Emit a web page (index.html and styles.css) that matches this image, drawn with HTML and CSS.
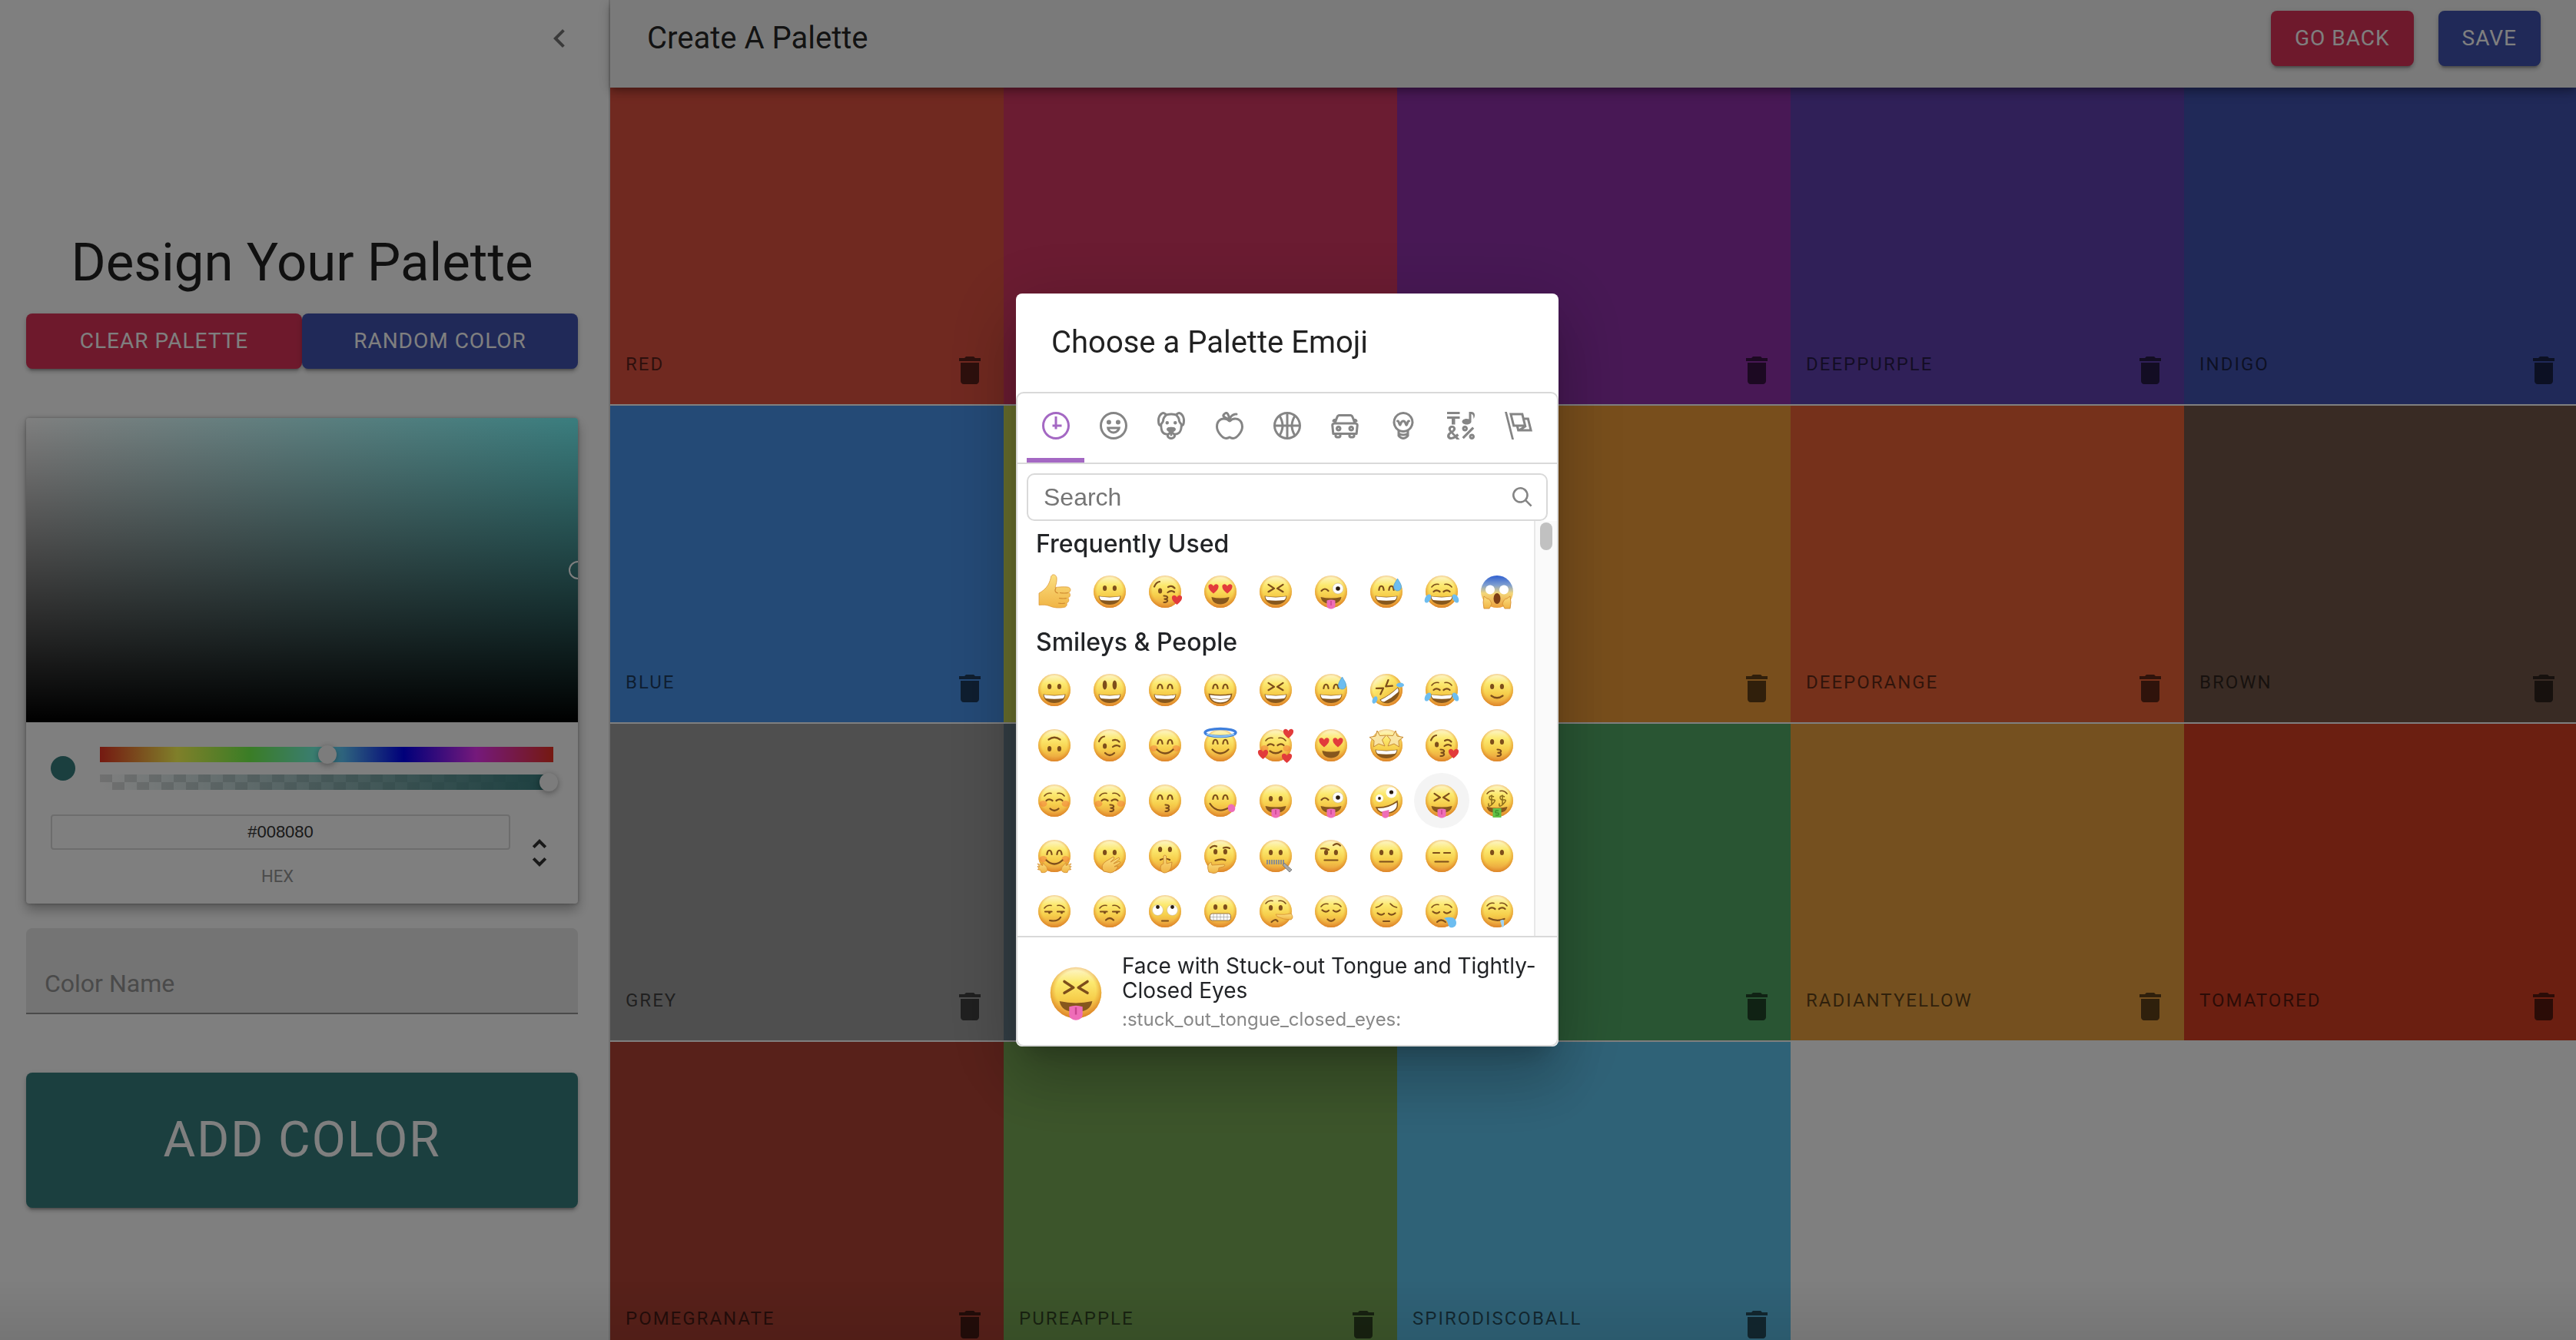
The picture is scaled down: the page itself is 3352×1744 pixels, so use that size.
FILE: index.html
```html
<!DOCTYPE html>
<html lang="en">
<head>
<meta charset="utf-8">
<title>Create A Palette</title>
<link rel="stylesheet" href="styles.css">
</head>
<body>

<svg class="sprite" aria-hidden="true">
  <defs>
    <linearGradient id="skin" x1="0" y1="0" x2="0" y2="1">
      <stop offset="0" stop-color="#fdf6cf"/><stop offset=".3" stop-color="#fce96f"/>
      <stop offset=".62" stop-color="#f6ce4b"/><stop offset="1" stop-color="#e8973a"/>
    </linearGradient>
    <radialGradient id="rim" cx=".5" cy=".46" r=".54">
      <stop offset=".72" stop-color="#e8952f" stop-opacity="0"/><stop offset="1" stop-color="#d97f22" stop-opacity=".8"/>
    </radialGradient>
    <linearGradient id="fear" x1="0" y1="0" x2="0" y2="1">
      <stop offset="0" stop-color="#2f5fd0"/><stop offset=".3" stop-color="#7f9fd0"/>
      <stop offset=".55" stop-color="#f3d678"/><stop offset="1" stop-color="#ec9f3b"/>
    </linearGradient>
    <linearGradient id="hand" x1="0" y1="0" x2="0" y2="1">
      <stop offset="0" stop-color="#fbdf80"/><stop offset="1" stop-color="#f0b445"/>
    </linearGradient>

    <!-- shared face parts -->
    <g id="face"><circle cx="24" cy="24" r="21" fill="url(#skin)"/><circle cx="24" cy="24" r="21" fill="url(#rim)"/></g>
    <g id="dots" fill="#7d4e1b"><ellipse cx="17.6" cy="19.6" rx="2.6" ry="3.5"/><ellipse cx="30.4" cy="19.6" rx="2.6" ry="3.5"/></g>
    <g id="arcs" class="ink"><path d="M14.4 22c.8-7 5.4-7 6.2 0M27.4 22c.8-7 5.4-7 6.2 0"/></g>
    <g id="squint" class="ink"><path d="M14.5 14.8l7.5 5-7.5 4.4M33.5 14.8l-7.5 5 7.5 4.4"/></g>
    <g id="shut" class="ink"><path d="M13.5 24q3.5-3.4 8 0M26.500 24q4.500-3.400 8 0"/></g>
    <g id="lids" class="ink"><path d="M12.500 22.500q4.500 4 8.500.5M27 23q4 3.500 8.500-.5"/></g>
    <g id="brows" class="ink thin"><path d="M11 18q3.500-4.500 9-3.500M28 14.500q5.500-1 9 3.500"/></g>
    <g id="sadbrows" class="ink thin"><path d="M10.500 19q5-1 8.500-5M29 14q3.500 4 8.500 5"/></g>
    <g id="side" class="ink"><path d="M12 23.500h8.500M28 23.500h8.500"/><circle cx="17.500" cy="24.800" r="1.600" fill="#7d4e1b" stroke="none"/><circle cx="33.500" cy="24.800" r="1.600" fill="#7d4e1b" stroke="none"/></g>
    <g id="blush" fill="#f2703c" opacity=".45"><ellipse cx="9.500" cy="28" rx="5" ry="4"/><ellipse cx="38.500" cy="28" rx="5" ry="4"/></g>
    <path id="heart" d="M0 6C-5 2-7-1-6.500-4-6-7-1.500-7.500 0-3.500 1.500-7.500 6-7 6.500-4 7-1 5 2 0 6z" fill="#e23b3b"/>
    <g id="hearts"><use href="#heart" x="15" y="20.500"/><use href="#heart" x="33" y="20.500"/></g>
    <g id="grin"><path d="M9.500 29.500q14.500 2.500 29 0C38 37 32 41 24 41S10 37 9.500 29.500z" fill="#86571d"/><path d="M10.500 30.300q13.500 2.300 27 0c-.3 2.700-1.200 3.700-2.500 4.700q-11 1.600-22 0c-1.300-1-2.200-2-2.500-4.700z" fill="#fff"/></g>
    <g id="open"><path d="M12.500 31q11.500 3 23 0c-.5 6-5 9.500-11.500 9.500S13 37 12.500 31z" fill="#86571d"/></g>
    <g id="tongue"><path d="M10.500 31q13.500 3 27 0c-1 6-6 9-13.500 9s-12.500-3-13.500-9z" fill="#86571d"/><path d="M18.500 35.500q5.500-2 11 0v6.500c0 6-11 6-11 0z" fill="#ee6db8"/><path d="M24 36v6" stroke="#c9458f" stroke-width="1.500"/></g>
    <path id="smile" class="ink" d="M16.500 31.500q7.500 5.500 15 0"/>
    <path id="bigsmile" class="ink" d="M13.500 29.500q10.500 10 21 0"/>
    <path id="kiss" class="ink" d="M22.500 29.500c6 0 6 4 1 4.200 5 0 5 4.300-1 4.300"/>
    <path id="flat" class="ink" d="M15.500 31.500h17"/>
    <path id="frown" class="ink" d="M19 35.500q5-5 10 0"/>
    <path id="tear" d="M0-8C3-3 5-.5 5 3A5 5 0 0 1-5 3C-5-.5-3-3 0-8z" fill="#6dbdf0" stroke="#3e97d4" stroke-width=".6"/>
    <g id="wildeye"><circle cx="33" cy="20" r="7" fill="#fff" stroke="#c9b28a" stroke-width=".6"/><circle cx="33" cy="20" r="2.800" fill="#2a1c10"/></g>

    <!-- emoji -->
    <symbol id="e-thumb" viewBox="0 0 48 48"><path d="M4 26c4-2 9-6 12-11 2-4 3-7 3.500-10 1-5 7-3.500 7.500 1 .5 5-1 9-2 12.500 4-.5 12-1 16-.5 5 .5 5 6 1.500 7 3 1.500 2.500 6.500-1 7.200 2.200 1.800 1.500 6-1.700 6.600 1.200 2.200 0 5.200-3.300 5.700-6 1-13 .8-18-1.500-4-1.800-9-2-14.500-1.500z" fill="url(#hand)" stroke="#dd9a3a" stroke-width=".8"/><path d="M31 25.500q6 1 11 0M30 32.500q6 1 10 0M29 39q5 1 9 0M26 19q-3 6 3 7" fill="none" stroke="#cf8a30" stroke-width="1.200"/></symbol>
    <symbol id="e-grinning" viewBox="0 0 48 48"><use href="#face"/><use href="#dots"/><use href="#grin"/></symbol>
    <symbol id="e-smiley" viewBox="0 0 48 48"><use href="#face"/><g fill="#7d4e1b"><ellipse cx="17.600" cy="17.500" rx="2.800" ry="6"/><ellipse cx="30.400" cy="17.500" rx="2.800" ry="6"/></g><use href="#grin"/></symbol>
    <symbol id="e-smile" viewBox="0 0 48 48"><use href="#face"/><use href="#arcs"/><use href="#grin"/></symbol>
    <symbol id="e-beam" viewBox="0 0 48 48"><use href="#face"/><use href="#arcs"/><path d="M9.500 29.500q14.500 2.500 29 0C38 37 32 41 24 41S10 37 9.500 29.500z" fill="#fff" stroke="#86571d" stroke-width="1.600"/><path d="M12 35q12 3 24 0" fill="none" stroke="#a98a60"/></symbol>
    <symbol id="e-laugh" viewBox="0 0 48 48"><use href="#face"/><use href="#squint"/><use href="#grin"/></symbol>
    <symbol id="e-sweat" viewBox="0 0 48 48"><use href="#face"/><use href="#arcs"/><use href="#grin"/><use href="#tear" x="38.500" y="15"/></symbol>
    <symbol id="e-rofl" viewBox="0 0 48 48"><g transform="rotate(-35 24 24)"><use href="#face"/><use href="#squint"/><use href="#grin"/></g><ellipse cx="42" cy="17.500" rx="5" ry="3" fill="#6dbdf0"/><ellipse cx="9" cy="37" rx="3" ry="5" transform="rotate(25 9 37)" fill="#6dbdf0"/></symbol>
    <symbol id="e-joy" viewBox="0 0 48 48"><use href="#face"/><use href="#brows"/><use href="#shut"/><use href="#grin"/><ellipse cx="6" cy="33" rx="3.600" ry="6" transform="rotate(30 6 33)" fill="#6dbdf0"/><ellipse cx="42" cy="33" rx="3.600" ry="6" transform="rotate(-30 42 33)" fill="#6dbdf0"/></symbol>
    <symbol id="e-slight" viewBox="0 0 48 48"><use href="#face"/><use href="#dots"/><use href="#smile"/></symbol>
    <symbol id="e-upside" viewBox="0 0 48 48"><use href="#face"/><g transform="rotate(180 24 24)"><use href="#dots"/><use href="#smile"/></g></symbol>
    <symbol id="e-wink" viewBox="0 0 48 48"><use href="#face"/><ellipse cx="17.600" cy="25" rx="2.600" ry="3.600" fill="#7d4e1b"/><path class="ink" d="M10 19q2.500-6 7-6.500M28 17.500q5-2 8.500 2M28 26q4.500-3.500 9-.5M18 34q6 6 12 0"/></symbol>
    <symbol id="e-blush" viewBox="0 0 48 48"><use href="#face"/><use href="#blush"/><use href="#arcs"/><use href="#bigsmile"/></symbol>
    <symbol id="e-angel" viewBox="0 0 48 48"><use href="#face"/><use href="#arcs"/><use href="#bigsmile"/><ellipse cx="24" cy="7.500" rx="20" ry="5" fill="none" stroke="#3f7fdc" stroke-width="3.400"/><path d="M6 9.500q18 6 36 0" fill="none" stroke="#8cc4f4" stroke-width="2"/></symbol>
    <symbol id="e-adore" viewBox="0 0 48 48"><use href="#face"/><use href="#blush"/><use href="#brows"/><use href="#shut"/><use href="#smile"/><use href="#heart" x="40.500" y="9"/><use href="#heart" x="7.500" y="36"/><use href="#heart" x="38.500" y="41"/></symbol>
    <symbol id="e-hearteyes" viewBox="0 0 48 48"><use href="#face"/><use href="#hearts"/><use href="#open"/></symbol>
    <symbol id="e-star" viewBox="0 0 48 48"><use href="#face"/><path d="M12 5l3.500 6.500 8-.5-5 6 3.500 8-8-3-6.500 4 .5-8-6-4.500 8-1.500zM36 5l2 7 8 1.500-6 4.500.5 8-6.500-4-8 3 3.500-8-5-6 8 .5z" fill="#f9e5a3" stroke="#c88a35" stroke-width="1"/><use href="#grin"/></symbol>
    <symbol id="e-kissheart" viewBox="0 0 48 48"><use href="#face"/><ellipse cx="17.600" cy="23" rx="2.600" ry="3.600" fill="#7d4e1b"/><path class="ink" d="M10 17.500q2.500-6 7-6.500M28 18q5-3 8.500 1.500M27.500 25q4.500-3.500 8.500-.5"/><use href="#kiss"/><use href="#heart" x="39.500" y="35"/></symbol>
    <symbol id="e-kissing" viewBox="0 0 48 48"><use href="#face"/><use href="#dots"/><use href="#kiss" x="2"/></symbol>
    <symbol id="e-relaxed" viewBox="0 0 48 48"><use href="#face"/><use href="#blush"/><use href="#brows"/><use href="#shut"/><path class="ink" d="M18.500 34.500q5.500 5 11 0"/></symbol>
    <symbol id="e-kissclosed" viewBox="0 0 48 48"><use href="#face"/><use href="#blush"/><use href="#brows"/><use href="#shut"/><use href="#kiss" x="2"/></symbol>
    <symbol id="e-kisssmile" viewBox="0 0 48 48"><use href="#face"/><use href="#arcs"/><use href="#kiss" x="2"/></symbol>
    <symbol id="e-yum" viewBox="0 0 48 48"><use href="#face"/><use href="#arcs"/><path class="ink" d="M10.500 28q9 14 25 5"/><path d="M34 31c3-4 7-3 9 1 1 4-1 7-4 7-4 0-6-3-5-8z" fill="#ee6db8"/></symbol>
    <symbol id="e-tongue" viewBox="0 0 48 48"><use href="#face"/><use href="#dots" y="2"/><use href="#tongue"/></symbol>
    <symbol id="e-zany" viewBox="0 0 48 48"><use href="#face"/><path class="ink" d="M11.500 23q4.500-5 9 0"/><use href="#wildeye"/><use href="#tongue"/></symbol>
    <symbol id="e-crazy" viewBox="0 0 48 48"><use href="#face"/><circle cx="15" cy="21" r="5" fill="#fff"/><circle cx="15" cy="21" r="1.900" fill="#2a1c10"/><circle cx="30.500" cy="13.500" r="7" fill="#fff"/><circle cx="30.500" cy="13" r="2.600" fill="#2a1c10"/><path d="M11 33q15 1 27-8c2 9-3 14-12 15-8 .8-13-2-15-7z" fill="#fff" stroke="#86571d" stroke-width="1.600"/><path d="M18.500 38l9-2v7c-1 5-9 5-9 0z" fill="#ee6db8"/></symbol>
    <symbol id="e-stuck" viewBox="0 0 48 48"><use href="#face"/><use href="#squint"/><use href="#tongue"/></symbol>
    <symbol id="e-money" viewBox="0 0 48 48"><use href="#face"/><use href="#brows" y="-3"/><path d="M20 19q-6-2.500-6 1t5 3-1 5.500-5-1M17 16.500v13M34 19q-6-2.500-6 1t5 3-1 5.500-5-1M31 16.500v13" fill="none" stroke="#8a6b1c" stroke-width="1.500"/><path d="M10.500 32q13.500 3 27 0c-1 6-6 8-13.500 8s-12.500-2-13.500-8z" fill="#86571d"/><path d="M18.500 34h11v12h-11z" fill="#63c248"/><path d="M26 37h-4v3h4v3h-4" fill="none" stroke="#2f7f25"/></symbol>
    <symbol id="e-hug" viewBox="0 0 48 48"><use href="#face"/><use href="#blush"/><use href="#arcs"/><use href="#bigsmile"/><path id="palm" d="M2 34l3 4-3-.5 2 3-2 1 4 1 1 3q6 1 8-3 0-5-4-7l-2-3 0 4z" fill="url(#hand)" stroke="#d68f32" stroke-width=".8"/><use href="#palm" transform="matrix(-1 0 0 1 48 0)"/></symbol>
    <symbol id="e-giggle" viewBox="0 0 48 48"><use href="#face"/><use href="#dots"/><path d="M16 44q-5-8 3-13l10-6 1 2-5 5 11-6 1 2-8 6 8-3 1 2-8 5 5-1q-3 8-10 9z" fill="url(#hand)" stroke="#cf8a30" stroke-width=".9"/></symbol>
    <symbol id="e-shush" viewBox="0 0 48 48"><use href="#face"/><use href="#dots" y="-4"/><path class="ink" d="M18 29q6-3 12 0"/><path d="M22 24q2-2 3.500 0l.5 10 7-2-1 7q-3 7-9 7-5-1-5-7 0-4 4-5z" fill="url(#hand)" stroke="#cf8a30" stroke-width=".9"/></symbol>
    <symbol id="e-think" viewBox="0 0 48 48"><use href="#face"/><use href="#dots" y="-1"/><path class="ink" d="M11 13.500q4-4 8-2M28 13.500q4-1.500 8 .5M17.500 30q8-3 13-.5"/><path d="M9 45q-4-10 3-13l1 4 16-1q2 2-1 3l-6 1.500q0 7-7 7z" fill="url(#hand)" stroke="#cf8a30" stroke-width=".9"/></symbol>
    <symbol id="e-zip" viewBox="0 0 48 48"><use href="#face"/><use href="#dots"/><path d="M12 32h24" stroke="#8d8d8d" stroke-width="6" stroke-dasharray="2 1"/><path d="M35 33l10 9-3 3-9-9z" fill="#a8a8a8" stroke="#6f6f6f" stroke-width=".8"/></symbol>
    <symbol id="e-raised" viewBox="0 0 48 48"><use href="#face"/><use href="#dots"/><path class="ink" d="M11 14.500q5-1 10 1.500M27 10q5-4 9 .5M15.500 29.500h17"/></symbol>
    <symbol id="e-neutral" viewBox="0 0 48 48"><use href="#face"/><use href="#dots"/><use href="#flat"/></symbol>
    <symbol id="e-expressionless" viewBox="0 0 48 48"><use href="#face"/><path class="ink" d="M13 20h8M27 20h8"/><use href="#flat"/></symbol>
    <symbol id="e-nomouth" viewBox="0 0 48 48"><use href="#face"/><use href="#dots"/></symbol>
    <symbol id="e-smirk" viewBox="0 0 48 48"><use href="#face"/><use href="#brows" y="2"/><use href="#side" y="1"/><path class="ink" d="M18 36q10 2 14-4"/></symbol>
    <symbol id="e-unamused" viewBox="0 0 48 48"><use href="#face"/><use href="#brows" y="2"/><use href="#side" y="1"/><use href="#frown"/></symbol>
    <symbol id="e-roll" viewBox="0 0 48 48"><use href="#face"/><g fill="#fff" stroke="#c9b28a" stroke-width=".6"><circle cx="14.500" cy="22.500" r="7"/><circle cx="33.500" cy="22.500" r="7"/></g><circle cx="14.500" cy="18.500" r="2.400" fill="#2a1c10"/><circle cx="33.500" cy="18.500" r="2.400" fill="#2a1c10"/><path class="ink" d="M20 36.500h8"/></symbol>
    <symbol id="e-grimace" viewBox="0 0 48 48"><use href="#face"/><use href="#dots" y="-1"/><rect x="10.500" y="27" width="27" height="9" rx="3" fill="#fff" stroke="#97713c"/><path d="M11 31.500h26M15 27v9M19.500 27v9M24 27v9M28.500 27v9M33 27v9" stroke="#a9a9a9" stroke-width=".8"/></symbol>
    <symbol id="e-lying" viewBox="0 0 48 48"><use href="#face"/><use href="#dots"/><use href="#brows" y="-4"/><path class="ink" d="M18.500 38q5-5 8-1"/><path d="M24 28q12 1 20-1 4 5 0 8-10 0-18-4z" fill="url(#hand)" stroke="#d68f32" stroke-width=".8"/></symbol>
    <symbol id="e-relieved" viewBox="0 0 48 48"><use href="#face"/><use href="#brows"/><use href="#lids"/><path class="ink" d="M19.500 34.500q4.500 4.500 9 0"/></symbol>
    <symbol id="e-pensive" viewBox="0 0 48 48"><use href="#face"/><use href="#sadbrows"/><use href="#lids" y="4"/><path class="ink" d="M20 37h8"/></symbol>
    <symbol id="e-sleepy" viewBox="0 0 48 48"><use href="#face"/><use href="#brows" y="1"/><use href="#lids" y="2"/><path class="ink" d="M18 38q5-5 11 0"/><path d="M27 33c10-3 16 0 16 6 0 5-4 7-8 6-4-2-1-7-8-12z" fill="#6dbdf0"/></symbol>
    <symbol id="e-drool" viewBox="0 0 48 48"><use href="#face"/><use href="#brows" y="-1"/><use href="#shut" y="-3"/><path class="ink" d="M13.500 33q10 5 20 1"/><path d="M28 36q4-2 5 0v7q-2 4-3 0z" fill="#9fd3f3"/></symbol>
    <symbol id="e-scream" viewBox="0 0 48 48"><circle cx="24" cy="24" r="21" fill="url(#fear)"/><circle cx="15" cy="21.500" r="6" fill="#fff"/><circle cx="33" cy="21.500" r="6" fill="#fff"/><ellipse cx="24" cy="33" rx="4.500" ry="7" fill="#7d3f16"/><path d="M7 30q-2 8 0 16h7l3-6q-2-7-6-7zM41 30q2 8 0 16h-7l-3-6q2-7 6-7z" fill="url(#hand)" stroke="#d68f32" stroke-width=".9"/></symbol>
  </defs>
  <symbol id="trash" viewBox="0 0 24 24"><path d="M6 19c0 1.100.9 2 2 2h8c1.100 0 2-.9 2-2V7H6v12zM19 4h-3.500l-1-1h-5l-1 1H5v2h14V4z"/></symbol>
</svg>

<div class="app">
  <aside class="drawer">
    <div class="drawer-head">
      <button class="icon-button" aria-label="Close drawer"><svg viewBox="0 0 24 24"><path d="M15.410 7.410L14 6l-6 6 6 6 1.410-1.410L10.830 12z"/></svg></button>
    </div>
    <div class="designer">
      <h1 class="designer-title">Design Your Palette</h1>
      <div class="designer-actions">
        <button class="button secondary">CLEAR PALETTE</button>
        <button class="button primary">RANDOM COLOR</button>
      </div>

      <div class="picker">
        <div class="saturation"><span class="saturation-pointer"></span></div>
        <div class="picker-body">
          <div class="picker-controls">
            <span class="picker-swatch"></span>
            <div class="picker-sliders">
              <div class="slider hue"><input type="range" min="0" max="360" value="179" aria-label="Hue"></div>
              <div class="slider alpha"><input type="range" min="0" max="100" value="100" aria-label="Opacity"></div>
            </div>
          </div>
          <div class="picker-fields">
            <div class="hex-field">
              <input id="hex" type="text" value="#008080">
              <label for="hex">HEX</label>
            </div>
            <button class="mode-toggle" aria-label="Change colour format"><svg viewBox="0 0 24 24"><path d="M12 5.830L15.170 9l1.410-1.410L12 3 7.410 7.590 8.830 9zM12 18.170L8.830 15l-1.410 1.410L12 21l4.590-4.590L15.170 15z"/></svg></button>
          </div>
        </div>
      </div>

      <input class="color-name" type="text" placeholder="Color Name" aria-label="Color Name">
      <button class="button add-color">ADD COLOR</button>
    </div>
  </aside>

  <main class="main">
    <header class="app-bar">
      <h2 class="app-title">Create A Palette</h2>
      <nav class="app-actions">
        <button class="button secondary">GO BACK</button>
        <button class="button primary">SAVE</button>
      </nav>
    </header>
    <div class="swatches">
      <div class="swatch red"><span>RED</span><button aria-label="Delete red"><svg><use href="#trash"/></svg></button></div>
      <div class="swatch pink"><span>PINK</span><button aria-label="Delete pink"><svg><use href="#trash"/></svg></button></div>
      <div class="swatch purple"><span>PURPLE</span><button aria-label="Delete purple"><svg><use href="#trash"/></svg></button></div>
      <div class="swatch deeppurple"><span>DEEPPURPLE</span><button aria-label="Delete deeppurple"><svg><use href="#trash"/></svg></button></div>
      <div class="swatch indigo"><span>INDIGO</span><button aria-label="Delete indigo"><svg><use href="#trash"/></svg></button></div>
      <div class="swatch blue"><span>BLUE</span><button aria-label="Delete blue"><svg><use href="#trash"/></svg></button></div>
      <div class="swatch lime"><span>LIME</span><button aria-label="Delete lime"><svg><use href="#trash"/></svg></button></div>
      <div class="swatch orange"><span>ORANGE</span><button aria-label="Delete orange"><svg><use href="#trash"/></svg></button></div>
      <div class="swatch deeporange"><span>DEEPORANGE</span><button aria-label="Delete deeporange"><svg><use href="#trash"/></svg></button></div>
      <div class="swatch brown"><span>BROWN</span><button aria-label="Delete brown"><svg><use href="#trash"/></svg></button></div>
      <div class="swatch grey"><span>GREY</span><button aria-label="Delete grey"><svg><use href="#trash"/></svg></button></div>
      <div class="swatch bluegrey"><span>BLUEGREY</span><button aria-label="Delete bluegrey"><svg><use href="#trash"/></svg></button></div>
      <div class="swatch green"><span>GREEN</span><button aria-label="Delete green"><svg><use href="#trash"/></svg></button></div>
      <div class="swatch radiantyellow"><span>RADIANTYELLOW</span><button aria-label="Delete radiantyellow"><svg><use href="#trash"/></svg></button></div>
      <div class="swatch tomatored"><span>TOMATORED</span><button aria-label="Delete tomatored"><svg><use href="#trash"/></svg></button></div>
      <div class="swatch pomegranate"><span>POMEGRANATE</span><button aria-label="Delete pomegranate"><svg><use href="#trash"/></svg></button></div>
      <div class="swatch pureapple"><span>PUREAPPLE</span><button aria-label="Delete pureapple"><svg><use href="#trash"/></svg></button></div>
      <div class="swatch spirodiscoball"><span>SPIRODISCOBALL</span><button aria-label="Delete spirodiscoball"><svg><use href="#trash"/></svg></button></div>
    </div>
  </main>
</div>

<div class="backdrop">
  <dialog open class="dialog" aria-labelledby="dialog-title">
    <h2 class="dialog-title" id="dialog-title">Choose a Palette Emoji</h2>
    <section class="mart">
      <nav class="anchors">
        <button class="anchor active" aria-label="Frequently Used"><svg viewBox="0 0 24 24"><path d="M13 4h-2l-.001 7H9v2h2v2h2v-2h4v-2h-4z"/><path d="M12 0C5.373 0 0 5.373 0 12s5.373 12 12 12 12-5.373 12-12S18.627 0 12 0m0 22C6.486 22 2 17.514 2 12S6.486 2 12 2s10 4.486 10 10-4.486 10-10 10"/></svg></button>
        <button class="anchor" aria-label="Smileys &amp; People"><svg viewBox="0 0 24 24"><path d="M12 0C5.373 0 0 5.373 0 12s5.373 12 12 12 12-5.373 12-12S18.627 0 12 0m0 22C6.486 22 2 17.514 2 12S6.486 2 12 2s10 4.486 10 10-4.486 10-10 10"/><path d="M8 7a2 2 0 1 0-.001 3.999A2 2 0 0 0 8 7M16 7a2 2 0 1 0-.001 3.999A2 2 0 0 0 16 7M15.232 15c-.693 1.195-1.870 2-3.349 2-1.477 0-2.655-.805-3.347-2H15m3-2H6a6 6 0 1 0 12 0"/></svg></button>
        <button class="anchor" aria-label="Animals &amp; Nature"><svg viewBox="0 0 24 24"><path d="M15.500 8a1.500 1.500 0 1 0 .001 3.001A1.500 1.500 0 0 0 15.500 8M8.500 8a1.500 1.500 0 1 0 .001 3.001A1.500 1.500 0 0 0 8.500 8"/><path d="M18.933 0h-.027c-.97 0-2.138.787-3.018 1.497-1.274-.374-2.612-.51-3.887-.51-1.285 0-2.616.133-3.874.517C7.245.79 6.069 0 5.093 0h-.027C3.352 0 .07 2.670.002 7.026c-.039 2.479.276 4.238 1.040 5.013.254.258.882.677 1.295.882.191 3.177.922 5.238 2.536 6.380.897.637 2.187.949 3.200 1.102C8.040 20.600 8 20.795 8 21c0 1.773 2.350 3 4 3 1.648 0 4-1.227 4-3 0-.201-.038-.393-.072-.586 2.573-.385 5.435-1.877 5.925-7.587.396-.22.887-.568 1.104-.788.763-.774 1.079-2.534 1.040-5.013C23.929 2.670 20.646 0 18.933 0M3.223 9.135c-.237.281-.837 1.155-.884 1.238-.15-.41-.368-1.349-.337-3.291.051-3.281 2.478-4.972 3.091-5.031.256.015.731.27 1.265.646-1.110 1.171-2.275 2.915-2.352 5.125-.133.546-.398.858-.783 1.313M12 22c-.901 0-1.954-.693-2-1 0-.654.475-1.236 1-1.602V20a1 1 0 1 0 2 0v-.602c.524.365 1 .947 1 1.602-.046.307-1.099 1-2 1m3-3.480v.02a4.752 4.752 0 0 0-1.262-1.020c1.092-.516 2.239-1.334 2.239-2.217 0-1.842-1.781-2.195-3.977-2.195-2.196 0-3.978.354-3.978 2.195 0 .883 1.148 1.701 2.238 2.217A4.800 4.800 0 0 0 9 18.539v-.025c-1-.076-2.182-.281-2.973-.842-1.301-.92-1.838-3.045-1.853-6.478l.023-.041c.496-.826 1.490-1.450 1.804-3.102 0-2.047 1.357-3.631 2.362-4.522C9.370 3.178 10.555 3 11.948 3c1.447 0 2.685.192 3.733.57 1 .9 2.316 2.465 2.316 4.480.313 1.651 1.307 2.275 1.803 3.102.035.058.068.117.102.178-.059 5.967-1.949 7.010-4.902 7.190m6.628-8.202c-.037-.065-.074-.13-.113-.195a7.587 7.587 0 0 0-.739-.987c-.385-.455-.648-.768-.782-1.313-.076-2.209-1.241-3.954-2.353-5.124.531-.376 1.004-.63 1.261-.647.636.071 3.044 1.764 3.096 5.031.027 1.810-.347 3.218-.37 3.235"/></svg></button>
        <button class="anchor" aria-label="Food &amp; Drink"><svg viewBox="0 0 24 24"><path d="M17 4.978c-1.838 0-2.876.396-3.680.934.513-1.172 1.768-2.934 4.680-2.934a1 1 0 0 0 0-2c-2.921 0-4.629 1.365-5.547 2.512-.064.078-.119.162-.18.244C11.730 1.838 10.798.023 9.207.023 8.579.022 7.850.306 7 .978 5.027 2.540 5.329 3.902 6.492 4.999 3.609 5.222 0 7.352 0 12.969c0 4.582 4.961 11.009 9 11.009 1.975 0 2.371-.486 3-1 .629.514 1.025 1 3 1 4.039 0 9-6.418 9-11 0-5.953-4.055-8-7-8M8.242 2.546c.641-.508.943-.523.965-.523.426.169.975 1.405 1.357 3.055-1.527-.629-2.741-1.352-2.980-1.846.059-.112.241-.356.658-.686M15 21.978c-1.080 0-1.210-.109-1.559-.402l-.176-.146c-.367-.302-.816-.452-1.266-.452s-.898.15-1.266.452l-.176.146c-.347.292-.477.402-1.557.402-2.813 0-7-5.389-7-9.009 0-5.823 4.488-5.991 5-5.991 1.939 0 2.484.471 3.387 1.251l.323.276a1.995 1.995 0 0 0 2.580 0l.323-.276c.902-.78 1.447-1.251 3.387-1.251.512 0 5 .168 5 6 0 3.617-4.187 9-7 9"/></svg></button>
        <button class="anchor" aria-label="Activity"><svg viewBox="0 0 24 24"><path d="M12 0C5.373 0 0 5.372 0 12c0 6.627 5.373 12 12 12 6.628 0 12-5.373 12-12 0-6.628-5.372-12-12-12m9.949 11H17.050c.224-2.527 1.232-4.773 1.968-6.113A9.966 9.966 0 0 1 21.949 11M13 11V2.051a9.945 9.945 0 0 1 4.432 1.564c-.858 1.491-2.156 4.220-2.392 7.385H13zm-2 0H8.961c-.238-3.165-1.536-5.894-2.393-7.385A9.950 9.950 0 0 1 11 2.051V11zm0 2v8.949a9.937 9.937 0 0 1-4.432-1.564c.857-1.492 2.155-4.221 2.393-7.385H11zm4.040 0c.236 3.164 1.534 5.893 2.392 7.385A9.920 9.920 0 0 1 13 21.949V13h2.040zM4.982 4.887C5.718 6.227 6.726 8.473 6.951 11h-4.900a9.977 9.977 0 0 1 2.931-6.113M2.051 13h4.900c-.226 2.527-1.233 4.771-1.969 6.113A9.972 9.972 0 0 1 2.051 13m16.967 6.113c-.735-1.342-1.744-3.586-1.968-6.113h4.899a9.961 9.961 0 0 1-2.931 6.113"/></svg></button>
        <button class="anchor" aria-label="Travel &amp; Places"><svg viewBox="0 0 24 24"><path d="M6.500 12C5.122 12 4 13.121 4 14.500S5.122 17 6.500 17 9 15.879 9 14.500 7.878 12 6.500 12m0 3c-.275 0-.5-.225-.5-.5s.225-.5.5-.5.5.225.5.5-.225.5-.5.5M17.500 12c-1.378 0-2.500 1.121-2.500 2.500s1.122 2.500 2.500 2.500 2.500-1.121 2.500-2.500-1.122-2.500-2.500-2.500m0 3c-.275 0-.5-.225-.5-.5s.225-.5.5-.5.5.225.5.5-.225.5-.5.5"/><path d="M22.482 9.494l-1.039-.346L21.400 9h.6c.552 0 1-.439 1-.992 0-.006-.003-.008-.003-.008H23c0-1-.889-2-1.984-2h-.642l-.731-1.717C19.262 3.012 18.091 2 16.764 2H7.236C5.909 2 4.738 3.012 4.357 4.283L3.626 6h-.642C1.889 6 1 7 1 8h.003S1 8.002 1 8.008C1 8.561 1.448 9 2 9h.6l-.043.148-1.039.346a2.001 2.001 0 0 0-1.359 2.097l.751 7.508a1 1 0 0 0 .994.901H3v1c0 1.103.896 2 2 2h2c1.104 0 2-.897 2-2v-1h6v1c0 1.103.896 2 2 2h2c1.104 0 2-.897 2-2v-1h1.096a.999.999 0 0 0 .994-.901l.751-7.508a2.001 2.001 0 0 0-1.359-2.097M6.273 4.857C6.402 4.430 6.788 4 7.236 4h9.527c.448 0 .834.43.963.857L19.313 9H4.688l1.585-4.143zM7 21H5v-1h2v1zm12 0h-2v-1h2v1zm2.189-3H2.811l-.662-6.607L3 11h18l.852.393L21.189 18z"/></svg></button>
        <button class="anchor" aria-label="Objects"><svg viewBox="0 0 24 24"><path d="M12 0a9 9 0 0 0-5 16.482V21s2.035 3 5 3 5-3 5-3v-4.518A9 9 0 0 0 12 0zm0 2c3.860 0 7 3.141 7 7s-3.140 7-7 7-7-3.141-7-7 3.140-7 7-7zM9 17.477c.94.332 1.946.523 3 .523s2.060-.19 3-.523v.834c-.91.436-1.925.689-3 .689a6.924 6.924 0 0 1-3-.69v-.833zm.236 3.070A8.854 8.854 0 0 0 12 21c.965 0 1.888-.167 2.758-.451C14.155 21.173 13.153 22 12 22c-1.102 0-2.117-.789-2.764-1.453z"/><path d="M14.745 12.449h-.004c-.852-.024-1.188-.858-1.577-1.824-.421-1.061-.703-1.561-1.182-1.566h-.009c-.481 0-.783.497-1.235 1.537-.436.982-.801 1.811-1.636 1.791l-.276-.043c-.565-.171-.853-.691-1.284-1.794-.125-.313-.202-.632-.27-.913-.051-.213-.127-.53-.195-.634C7.067 9.004 7.039 9 6.990 9A1 1 0 0 1 7 7h.01c1.662.017 2.015 1.373 2.198 2.134.486-.981 1.304-2.058 2.797-2.075 1.531.018 2.280 1.153 2.731 2.141l.002-.008C14.944 8.424 15.327 7 16.979 7h.032A1 1 0 1 1 17 9h-.011c-.149.076-.256.474-.319.709a6.484 6.484 0 0 1-.311.951c-.429.973-.79 1.789-1.614 1.789"/></svg></button>
        <button class="anchor" aria-label="Symbols"><svg viewBox="0 0 24 24"><path d="M0 0h11v2H0zM4 11h3V6h4V4H0v2h4zM15.500 17c1.381 0 2.500-1.116 2.500-2.493s-1.119-2.493-2.500-2.493S13 13.130 13 14.507 14.119 17 15.500 17m0-2.986c.276 0 .5.222.5.493 0 .272-.224.493-.5.493s-.5-.221-.5-.493.224-.493.5-.493M21.500 19.014c-1.381 0-2.500 1.116-2.500 2.493S20.119 24 21.500 24s2.500-1.116 2.500-2.493-1.119-2.493-2.500-2.493m0 2.986a.497.497 0 0 1-.5-.493c0-.271.224-.493.5-.493s.5.222.5.493a.497.497 0 0 1-.5.493M22 13l-9 9 1.513 1.500 8.990-9.009zM17 11c2.209 0 4-1.119 4-2.500V2s.985-.161 1.498.949C23.010 4.055 23 6 23 6s1-1.119 1-3.135C24-.02 21 0 21 0h-2v6.347A5.853 5.853 0 0 0 17 6c-2.209 0-4 1.119-4 2.500s1.791 2.500 4 2.500M10.297 20.482l-1.475-1.585a47.540 47.540 0 0 1-1.442 1.129c-.307-.288-.989-1.016-2.045-2.183.902-.836 1.479-1.466 1.729-1.892s.376-.871.376-1.336c0-.592-.273-1.178-.818-1.759-.546-.581-1.329-.871-2.349-.871-1.008 0-1.790.293-2.344.879-.556.587-.832 1.181-.832 1.784 0 .813.419 1.748 1.256 2.805-.847.614-1.444 1.208-1.794 1.784a3.465 3.465 0 0 0-.523 1.833c0 .857.308 1.560.924 2.107.616.549 1.423.823 2.420.823 1.173 0 2.444-.379 3.813-1.137L8.235 24h2.819l-2.090-2.383 1.333-1.135zm-6.736-6.389a1.020 1.020 0 0 1 .73-.286c.31 0 .559.085.747.254a.849.849 0 0 1 .283.659c0 .518-.419 1.112-1.257 1.784-.536-.651-.805-1.231-.805-1.742a.901.901 0 0 1 .302-.669M3.740 22c-.427 0-.778-.116-1.057-.349-.279-.232-.418-.487-.418-.766 0-.594.509-1.288 1.527-2.083.968 1.134 1.717 1.946 2.248 2.438-.921.507-1.686.76-2.300.76"/></svg></button>
        <button class="anchor" aria-label="Flags"><svg viewBox="0 0 24 24"><path d="M0 0l6.084 24H8L1.916 0zM21 5h-4l-1-4H4l3 12h3l1 4h13L21 5zM6.563 3h7.875l2 8H8.563l-2-8zm8.832 10l-2.856 1.904L12.063 13h3.332zM19 13l-1.500-6h1.938l2 8H16l3-2z"/></svg></button>
      </nav>

      <div class="search">
        <input type="search" placeholder="Search" aria-label="Search emoji">
        <button aria-label="Search"><svg viewBox="0 0 20 20"><path d="M12.900 14.320a8 8 0 1 1 1.410-1.410l5.350 5.330-1.420 1.420-5.330-5.340zM8 14A6 6 0 1 0 8 2a6 6 0 0 0 0 12z"/></svg></button>
      </div>

      <div class="scroll">
        <div class="emoji-list">
          <h3 class="category">Frequently Used</h3>
          <div class="emoji-grid">
            <button aria-label="thumbs up"><svg><use href="#e-thumb"/></svg></button>
            <button aria-label="grinning"><svg><use href="#e-grinning"/></svg></button>
            <button aria-label="kissing heart"><svg><use href="#e-kissheart"/></svg></button>
            <button aria-label="heart eyes"><svg><use href="#e-hearteyes"/></svg></button>
            <button aria-label="laughing"><svg><use href="#e-laugh"/></svg></button>
            <button aria-label="stuck out tongue winking eye"><svg><use href="#e-zany"/></svg></button>
            <button aria-label="sweat smile"><svg><use href="#e-sweat"/></svg></button>
            <button aria-label="joy"><svg><use href="#e-joy"/></svg></button>
            <button aria-label="scream"><svg><use href="#e-scream"/></svg></button>
          </div>
          <h3 class="category">Smileys &amp; People</h3>
          <div class="emoji-grid">
            <button aria-label="grinning"><svg><use href="#e-grinning"/></svg></button>
            <button aria-label="smiley"><svg><use href="#e-smiley"/></svg></button>
            <button aria-label="smile"><svg><use href="#e-smile"/></svg></button>
            <button aria-label="grin"><svg><use href="#e-beam"/></svg></button>
            <button aria-label="laughing"><svg><use href="#e-laugh"/></svg></button>
            <button aria-label="sweat smile"><svg><use href="#e-sweat"/></svg></button>
            <button aria-label="rolling on the floor laughing"><svg><use href="#e-rofl"/></svg></button>
            <button aria-label="joy"><svg><use href="#e-joy"/></svg></button>
            <button aria-label="slightly smiling"><svg><use href="#e-slight"/></svg></button>
            <button aria-label="upside down"><svg><use href="#e-upside"/></svg></button>
            <button aria-label="wink"><svg><use href="#e-wink"/></svg></button>
            <button aria-label="blush"><svg><use href="#e-blush"/></svg></button>
            <button aria-label="innocent"><svg><use href="#e-angel"/></svg></button>
            <button aria-label="smiling with hearts"><svg><use href="#e-adore"/></svg></button>
            <button aria-label="heart eyes"><svg><use href="#e-hearteyes"/></svg></button>
            <button aria-label="star struck"><svg><use href="#e-star"/></svg></button>
            <button aria-label="kissing heart"><svg><use href="#e-kissheart"/></svg></button>
            <button aria-label="kissing"><svg><use href="#e-kissing"/></svg></button>
            <button aria-label="relaxed"><svg><use href="#e-relaxed"/></svg></button>
            <button aria-label="kissing closed eyes"><svg><use href="#e-kissclosed"/></svg></button>
            <button aria-label="kissing smiling eyes"><svg><use href="#e-kisssmile"/></svg></button>
            <button aria-label="yum"><svg><use href="#e-yum"/></svg></button>
            <button aria-label="stuck out tongue"><svg><use href="#e-tongue"/></svg></button>
            <button aria-label="stuck out tongue winking eye"><svg><use href="#e-zany"/></svg></button>
            <button aria-label="zany face"><svg><use href="#e-crazy"/></svg></button>
            <button class="hovered" aria-label="stuck out tongue closed eyes"><svg><use href="#e-stuck"/></svg></button>
            <button aria-label="money mouth"><svg><use href="#e-money"/></svg></button>
            <button aria-label="hugging"><svg><use href="#e-hug"/></svg></button>
            <button aria-label="hand over mouth"><svg><use href="#e-giggle"/></svg></button>
            <button aria-label="shushing"><svg><use href="#e-shush"/></svg></button>
            <button aria-label="thinking"><svg><use href="#e-think"/></svg></button>
            <button aria-label="zipper mouth"><svg><use href="#e-zip"/></svg></button>
            <button aria-label="raised eyebrow"><svg><use href="#e-raised"/></svg></button>
            <button aria-label="neutral"><svg><use href="#e-neutral"/></svg></button>
            <button aria-label="expressionless"><svg><use href="#e-expressionless"/></svg></button>
            <button aria-label="no mouth"><svg><use href="#e-nomouth"/></svg></button>
            <button aria-label="smirk"><svg><use href="#e-smirk"/></svg></button>
            <button aria-label="unamused"><svg><use href="#e-unamused"/></svg></button>
            <button aria-label="rolling eyes"><svg><use href="#e-roll"/></svg></button>
            <button aria-label="grimacing"><svg><use href="#e-grimace"/></svg></button>
            <button aria-label="lying"><svg><use href="#e-lying"/></svg></button>
            <button aria-label="relieved"><svg><use href="#e-relieved"/></svg></button>
            <button aria-label="pensive"><svg><use href="#e-pensive"/></svg></button>
            <button aria-label="sleepy"><svg><use href="#e-sleepy"/></svg></button>
            <button aria-label="drooling"><svg><use href="#e-drool"/></svg></button>
          </div>
        </div>
        <div class="scroll-track"><div class="scroll-thumb"></div></div>
      </div>

      <footer class="preview">
        <svg class="preview-emoji"><use href="#e-stuck"/></svg>
        <div class="preview-data">
          <div class="preview-name">Face with Stuck-out Tongue and Tightly-Closed Eyes</div>
          <div class="preview-code">:stuck_out_tongue_closed_eyes:</div>
        </div>
      </footer>
    </section>
  </dialog>
</div>
</body>
</html>
```
FILE: styles.css
```css
* { box-sizing: border-box; }
body { margin: 0; background: #fff; color: rgba(0, 0, 0, .87); font-family: Roboto, sans-serif; overflow: hidden; }
button { border: 0; padding: 0; background: none; font: inherit; color: inherit; cursor: pointer; }
input { font: inherit; margin: 0; }
h1, h2, h3 { margin: 0; font-weight: 400; }
svg { display: block; fill: currentColor; }
.sprite { position: absolute; width: 0; height: 0; }
.ink { fill: none; stroke: #7d4e1b; stroke-width: 2.2px; stroke-linecap: round; stroke-linejoin: round; }
.thin { stroke-width: 1.6px; }

.app { display: flex; height: 100vh; overflow: hidden; }

/* Drawer */
.drawer { flex: 0 0 794px; border-right: 2px solid #e0e0e0; background: #fff; }
.drawer-head { display: flex; justify-content: flex-end; padding: 2px 16px; }
.icon-button { padding: 24px; color: rgba(0, 0, 0, .54); }
.icon-button svg { width: 48px; height: 48px; }
.designer { display: flex; flex-direction: column; padding: 200px 40px 0 34px; }
.designer-title { font-size: 69px; line-height: 84px; text-align: center; margin-bottom: 24px; }
.designer-actions { display: flex; }
.designer-actions .button { flex: 1; }

.button {
  padding: 12px 31px; border-radius: 8px; font-size: 28px; line-height: 48px; letter-spacing: 1px; color: #fff;
  box-shadow: 0 6px 2px -4px rgba(0, 0, 0, .2), 0 4px 4px rgba(0, 0, 0, .14), 0 2px 10px rgba(0, 0, 0, .12);
}
.primary { background: #4052b0; }
.secondary { background: #dc3359; }
.add-color { margin-top: 76px; padding: 32px; background: #377e7f; font-size: 64px; line-height: 112px; letter-spacing: 2px; }

/* Colour picker */
.picker { margin: 64px 0 32px; border-radius: 4px; background: #fff; box-shadow: 0 0 4px rgba(0, 0, 0, .3), 0 8px 16px rgba(0, 0, 0, .3); }
.saturation {
  position: relative; height: 396px; overflow: hidden; border-radius: 4px 4px 0 0;
  background: linear-gradient(to top, #000, transparent), linear-gradient(to right, #fff, #75fbfd);
}
.saturation-pointer { position: absolute; right: -12px; top: 50%; width: 24px; height: 24px; margin-top: -12px; border: 2px solid #fff; border-radius: 50%; }
.picker-body { padding: 32px 32px 24px; }
.picker-controls { display: flex; }
.picker-swatch { width: 32px; height: 32px; margin: 12px 32px 0 0; border-radius: 50%; background: #377e7f; }
.picker-sliders { flex: 1; display: grid; gap: 16px; }
.slider { display: flex; align-items: center; height: 20px; }
.hue { background: linear-gradient(to right, #ea3323, #ffff54 17%, #75fb4c 33%, #75fbfd 50%, #0000f5 67%, #ea33f7 83%, #ea3323); }
.alpha {
  background: linear-gradient(to right, transparent, #377e7f),
    conic-gradient(#fff 25%, #e0e0e0 0 50%, #fff 0 75%, #e0e0e0 0) 0 50% / 32px 32px;
}
.slider input { appearance: none; flex: none; width: calc(100% + 6px); height: 24px; background: none; }
.slider input::-webkit-slider-thumb { appearance: none; width: 24px; height: 24px; border-radius: 50%; background: #f8f8f8; box-shadow: 0 2px 8px rgba(0, 0, 0, .37); }
.picker-fields { display: flex; align-items: flex-start; padding-top: 32px; }
.hex-field { flex: 1; display: flex; flex-direction: column; }
.hex-field input { width: 100%; height: 46px; border: 2px solid #dadada; border-radius: 4px; padding: 0; background: none; text-align: center; font-family: "Liberation Sans", sans-serif; font-size: 22px; color: #333; }
.hex-field label { margin-top: 24px; padding-right: 8px; font-size: 22px; line-height: 22px; text-align: center; color: #969696; }
.mode-toggle { margin: 26px -6px 0 14px; color: #333; }
.mode-toggle svg { width: 48px; height: 48px; }
.color-name { width: 100%; height: 112px; padding: 54px 24px 20px; border: 0; border-bottom: 2px solid #949494; border-radius: 8px 8px 0 0; background: #e8e8e8; font-size: 32px; line-height: 38px; }
.color-name::placeholder { color: #949494; opacity: 1; }

/* Main area */
.main { flex: 1; min-width: 0; }
.app-bar {
  position: relative; display: flex; align-items: center; justify-content: space-between; padding: 14px 46px 28px 48px;
  background: #f5f5f5; box-shadow: 0 4px 8px -2px rgba(0, 0, 0, .2), 0 8px 10px rgba(0, 0, 0, .14), 0 2px 20px rgba(0, 0, 0, .12);
}
.app-title { font-size: 40px; line-height: 64px; }
.app-actions { display: flex; gap: 32px; }
.swatches { display: grid; grid-template-columns: repeat(5, 1fr); row-gap: 2px; margin-right: -2px; }
.swatch { display: flex; align-items: flex-end; justify-content: space-between; min-height: 412px; padding: 20px; color: rgba(0, 0, 0, .6); }
.swatch span { font-size: 24px; line-height: 32px; letter-spacing: 2px; padding-bottom: 16px; }
.swatch svg { width: 48px; height: 48px; }
.red { background: #e15241; }
.pink { background: #d63864; }
.purple { background: #9031aa; }
.deeppurple { background: #6041b1; }
.indigo { background: #4052b0; }
.blue { background: #4994ec; }
.lime { background: #d0dc59; }
.orange { background: #f19d38; }
.deeporange { background: #ec6337; }
.brown { background: #735748; }
.grey { background: #9e9e9e; }
.bluegrey { background: #667c89; }
.green { background: #52aa66; }
.radiantyellow { background: #eba03e; }
.tomatored { background: #d63e23; }
.pomegranate { background: #b04234; }
.pureapple { background: #79aa56; }
.spirodiscoball { background: #5fc4ee; }

/* Modal */
.backdrop {
  position: fixed; inset: 0; display: flex; align-items: center; justify-content: center; padding-right: 2px;
  background: linear-gradient(to top, rgba(0, 0, 0, .08), transparent 80px), rgba(0, 0, 0, .5);
}
.dialog {
  position: static; margin: 0; width: 706px; padding: 0; border: 0; border-radius: 8px; background: #fff; color: rgba(0, 0, 0, .87);
  box-shadow: 0 22px 30px -14px rgba(0, 0, 0, .2), 0 48px 76px 6px rgba(0, 0, 0, .14), 0 18px 92px 16px rgba(0, 0, 0, .12);
}
.dialog-title { padding: 32px 46px; font-size: 40px; line-height: 64px; }
.mart { border: 2px solid #d9d9d9; border-radius: 10px; font-family: Inter, sans-serif; color: #222427; overflow: hidden; }
.anchors { display: flex; padding: 0 12px; border-bottom: 2px solid #d9d9d9; }
.anchor { flex: 1; display: flex; justify-content: center; padding: 24px 0; border-bottom: 6px solid transparent; color: #858585; }
.anchor svg { width: 36px; height: 36px; }
.anchor.active { color: #a468c3; border-bottom-color: #a468c3; }
.search { display: flex; align-items: center; height: 62px; margin: 12px 12px 0 12px; border: 2px solid #d9d9d9; border-radius: 10px; padding: 0 18px 0 20px; }
.search input { flex: 1; min-width: 0; border: 0; padding: 0; background: none; font-family: "Liberation Sans", sans-serif; font-size: 32px; }
.search input::placeholder { color: #757575; opacity: 1; }
.search button { color: #858585; }
.search svg { width: 26px; height: 26px; }
.scroll { display: flex; height: 540px; overflow: hidden; }
.emoji-list { flex: 1; padding-left: 12px; }
.category { padding: 12px 12px 8px; font-size: 32px; line-height: 36px; font-weight: 500; }
.emoji-grid { display: grid; grid-template-columns: repeat(9, 72px); }
.emoji-grid button { display: flex; align-items: center; justify-content: center; height: 72px; border-radius: 50%; }
.emoji-grid svg { width: 48px; height: 48px; }
.emoji-grid .hovered { background: #f4f4f4; }
.scroll-track { width: 30px; padding: 2px 6px; border-left: 2px solid #e8e8e8; background: #fafafa; }
.scroll-thumb { width: 16px; height: 36px; border-radius: 8px; background: #c1c1c1; }
.preview { display: flex; align-items: center; gap: 22px; height: 142px; padding: 4px 20px 0 38px; border-top: 2px solid #d9d9d9; }
.preview-emoji { flex: none; width: 76px; height: 76px; }
.preview-name { font-size: 28px; line-height: 32px; }
.preview-code { margin-top: 6px; font-size: 24px; line-height: 32px; color: #888; }
```
